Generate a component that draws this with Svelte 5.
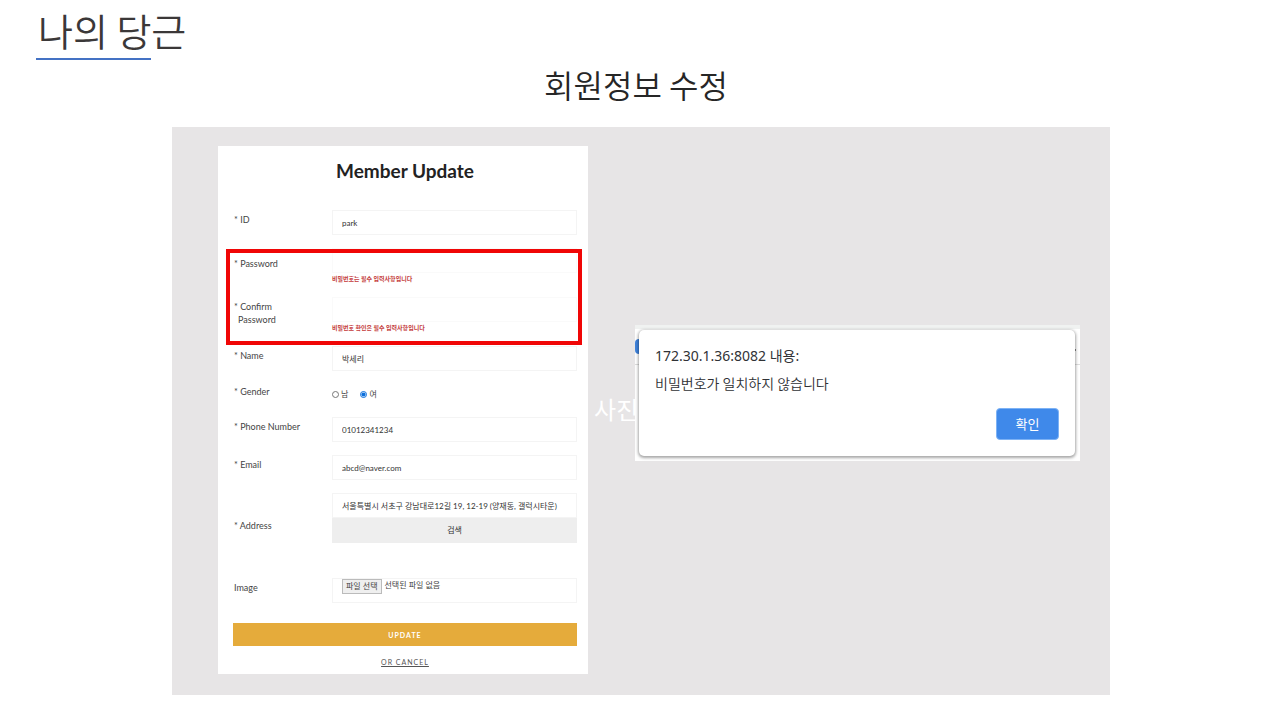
<script>
  let member = $state({
    id: 'park',
    password: '',
    confirm: '',
    name: '박세리',
    gender: 'female',
    phone: '01012341234',
    email: 'abcd@naver.com',
    address: '서울특별시 서초구 강남대로12길 19, 12-19 (양재동, 갤럭시타운)'
  });
</script>

<main class="slide">
  <h1>나의 당근</h1>
  <h2>회원정보 수정</h2>

  <div class="stage">
    <span class="placeholder">사진</span>

    <form class="card" onsubmit={(e) => e.preventDefault()}>
      <h3>Member Update</h3>

      <div class="row">
        <label for="id">* ID</label>
        <input id="id" class="box" type="text" bind:value={member.id} />
      </div>

      <div class="highlight">
        <div class="row low">
          <label for="password">* Password</label>
          <div>
            <input id="password" class="box faint" type="password" bind:value={member.password} />
            <p class="error">비밀번호는 필수 입력사항입니다</p>
          </div>
        </div>
        <div class="row low">
          <label for="confirm">* Confirm<br /><span class="indent">Password</span></label>
          <div>
            <input id="confirm" class="box faint" type="password" bind:value={member.confirm} />
            <p class="error">비밀번호 확인은 필수 입력사항입니다</p>
          </div>
        </div>
      </div>

      <div class="row">
        <label for="name">* Name</label>
        <input id="name" class="box" type="text" bind:value={member.name} />
      </div>

      <div class="row gender" role="radiogroup" aria-labelledby="gender-label">
        <span id="gender-label" class="label">* Gender</span>
        <div class="options">
          <label><input type="radio" name="gender" value="male" bind:group={member.gender} />남</label>
          <label><input type="radio" name="gender" value="female" bind:group={member.gender} />여</label>
        </div>
      </div>

      <div class="row">
        <label for="phone">* Phone Number</label>
        <input id="phone" class="box" type="tel" bind:value={member.phone} />
      </div>

      <div class="row">
        <label for="email">* Email</label>
        <input id="email" class="box" type="email" bind:value={member.email} />
      </div>

      <div class="row address">
        <label for="address">* Address</label>
        <div>
          <input id="address" class="box" type="text" bind:value={member.address} />
          <button type="button" class="search">검색</button>
        </div>
      </div>

      <div class="row image">
        <label for="image">Image</label>
        <div class="box file">
          <span class="pick">파일 선택</span>
          <span>선택된 파일 없음</span>
          <input id="image" type="file" />
        </div>
      </div>

      <button type="submit" class="update">UPDATE</button>
      <a class="cancel" href="#cancel">OR CANCEL</a>
    </form>

    <div class="browser">
      <span class="tab"></span>
      <span class="minimize"></span>
      <div class="alert" role="alertdialog" aria-labelledby="alert-title" aria-describedby="alert-text">
        <p id="alert-title" class="origin">172.30.1.36:8082 내용:</p>
        <p id="alert-text" class="message">비밀번호가 일치하지 않습니다</p>
        <button type="button" class="ok">확인</button>
      </div>
    </div>
  </div>
</main>

<style>
  :global(body) {
    margin: 0;
    background: #fff;
  }

  * {
    box-sizing: border-box;
  }

  h1,
  h2,
  h3,
  p {
    margin: 0;
    font-weight: 400;
  }

  input,
  button {
    font-family: inherit;
  }

  .slide {
    min-height: 100vh;
    padding: 4px 0 25px;
    font-family: 'Noto Sans CJK KR', sans-serif;
  }

  h1 {
    padding-left: 36px;
    font-size: 38px;
    font-weight: 350;
    line-height: 52px;
    text-indent: 2px;
    color: #3b3838;
  }

  h1::after {
    content: '';
    display: block;
    width: 115px;
    height: 2px;
    margin-top: 2px;
    background: #4472c4;
  }

  h2 {
    margin-bottom: 19px;
    padding-right: 8px;
    text-align: center;
    font-size: 32px;
    font-weight: 350;
    line-height: 48px;
    color: #262626;
  }

  .stage {
    position: relative;
    display: grid;
    grid-template-columns: 370fr 445fr;
    align-items: start;
    gap: 47px;
    margin: 0 170px 0 172px;
    padding: 19px 30px 21px 46px;
    background: #e7e5e6;
  }

  .placeholder {
    position: absolute;
    top: 50%;
    left: 45%;
    margin-top: -20px;
    font-size: 24px;
    line-height: 36px;
    color: #fff;
  }

  /* Member form */
  .card {
    min-width: 0;
    display: flex;
    flex-direction: column;
    gap: 13px;
    padding: 0 11px 3px 15px;
    background: #fff;
    font-family: Lato, 'Noto Sans CJK KR', sans-serif;
    font-size: 9px;
    line-height: 13px;
    color: #444;
  }

  h3 {
    padding: 12px 0 13px;
    text-align: center;
    font-size: 19px;
    font-weight: 700;
    line-height: 26px;
    color: #222;
  }

  .row {
    display: grid;
    grid-template-columns: 99px minmax(0, 1fr);
    align-items: start;
  }

  .row > label,
  .label {
    padding-top: 3px;
    padding-left: 1px;
  }

  .row.low > label {
    padding-top: 9px;
  }

  .row.low + .low > label {
    padding-top: 3px;
  }

  .indent {
    padding-left: 4px;
  }

  .box {
    display: block;
    width: 100%;
    height: 25px;
    padding: 0 9px;
    border: 1px solid #f4f4f4;
    border-radius: 0;
    background: #fff;
    font-size: 8px;
    color: #333;
    outline: none;
  }

  .faint {
    border-color: #fafafa;
  }

  .highlight {
    position: relative;
    display: grid;
    gap: 13px;
  }

  .highlight::after {
    content: '';
    position: absolute;
    inset: 1px -5px -12px -7px;
    border: 4px solid #f00606;
    pointer-events: none;
  }

  .error {
    font-size: 6px;
    font-weight: 700;
    line-height: 11px;
    color: #c43a3a;
  }

  .gender {
    height: 20px;
  }

  .gender .label {
    padding-top: 1px;
  }

  .options {
    display: flex;
    gap: 12px;
    padding-top: 4px;
    font-size: 8px;
  }

  .options label {
    display: flex;
    align-items: center;
    gap: 2px;
  }

  .options input {
    width: 7px;
    height: 7px;
    margin: 0;
    accent-color: #0b6fdc;
  }

  .address > label {
    padding-top: 26px;
  }

  .search {
    display: block;
    width: 100%;
    height: 25px;
    padding: 0 0 2px;
    border: 0;
    background: #eee;
    font-size: 8px;
    color: #333;
  }

  .image {
    margin-top: 22px;
  }

  .file {
    position: relative;
    display: flex;
    align-items: flex-start;
    gap: 3px;
    line-height: 13px;
    color: #444;
  }

  .pick {
    padding: 0 3px;
    border: 1px solid #bbb;
    background: #efefef;
  }

  .file input {
    position: absolute;
    inset: 0;
    width: 100%;
    opacity: 0;
  }

  .update {
    height: 23px;
    margin-top: 7px;
    padding: 0;
    border: 0;
    background: #e5ab3b;
    font-size: 7px;
    font-weight: 700;
    letter-spacing: 1px;
    color: #fff;
  }

  .cancel {
    align-self: center;
    margin-top: -3px;
    padding-bottom: 2px;
    font-size: 7px;
    letter-spacing: 1px;
    text-underline-offset: 1px;
    color: #555;
  }

  /* Browser alert */
  .browser {
    position: relative;
    min-width: 0;
    margin-top: 179px;
    padding: 5px 5px 5px 4px;
    background: linear-gradient(#f0f2f1 4px, #fff 4px, #fff 39px, #ddd 39px, #ddd 40px, #fff 40px);
  }

  .tab {
    position: absolute;
    top: 14px;
    left: 0;
    width: 8px;
    height: 15px;
    border-radius: 4px 0 0 4px;
    background: #3f83dc;
  }

  .minimize {
    position: absolute;
    top: 24px;
    right: 4px;
    width: 6px;
    height: 2px;
    background: #888;
  }

  .alert {
    position: relative;
    display: flex;
    flex-direction: column;
    padding: 13px 16px 16px;
    border-radius: 5px;
    background: #fff;
    box-shadow: 0 1px 3px 1px rgba(0, 0, 0, 0.35);
    color: #303236;
  }

  .origin {
    font-size: 14px;
    line-height: 26px;
    font-family: 'Noto Sans', 'Noto Sans CJK KR', sans-serif;
  }

  .message {
    font-size: 14px;
    font-weight: 350;
    line-height: 28px;
  }

  .ok {
    align-self: flex-end;
    width: 63px;
    height: 32px;
    margin-top: 11px;
    padding: 0 0 2px;
    border: 1px solid #7db2f5;
    border-radius: 4px;
    background: #3f89ea;
    font-size: 13px;
    color: #fff;
  }
</style>
